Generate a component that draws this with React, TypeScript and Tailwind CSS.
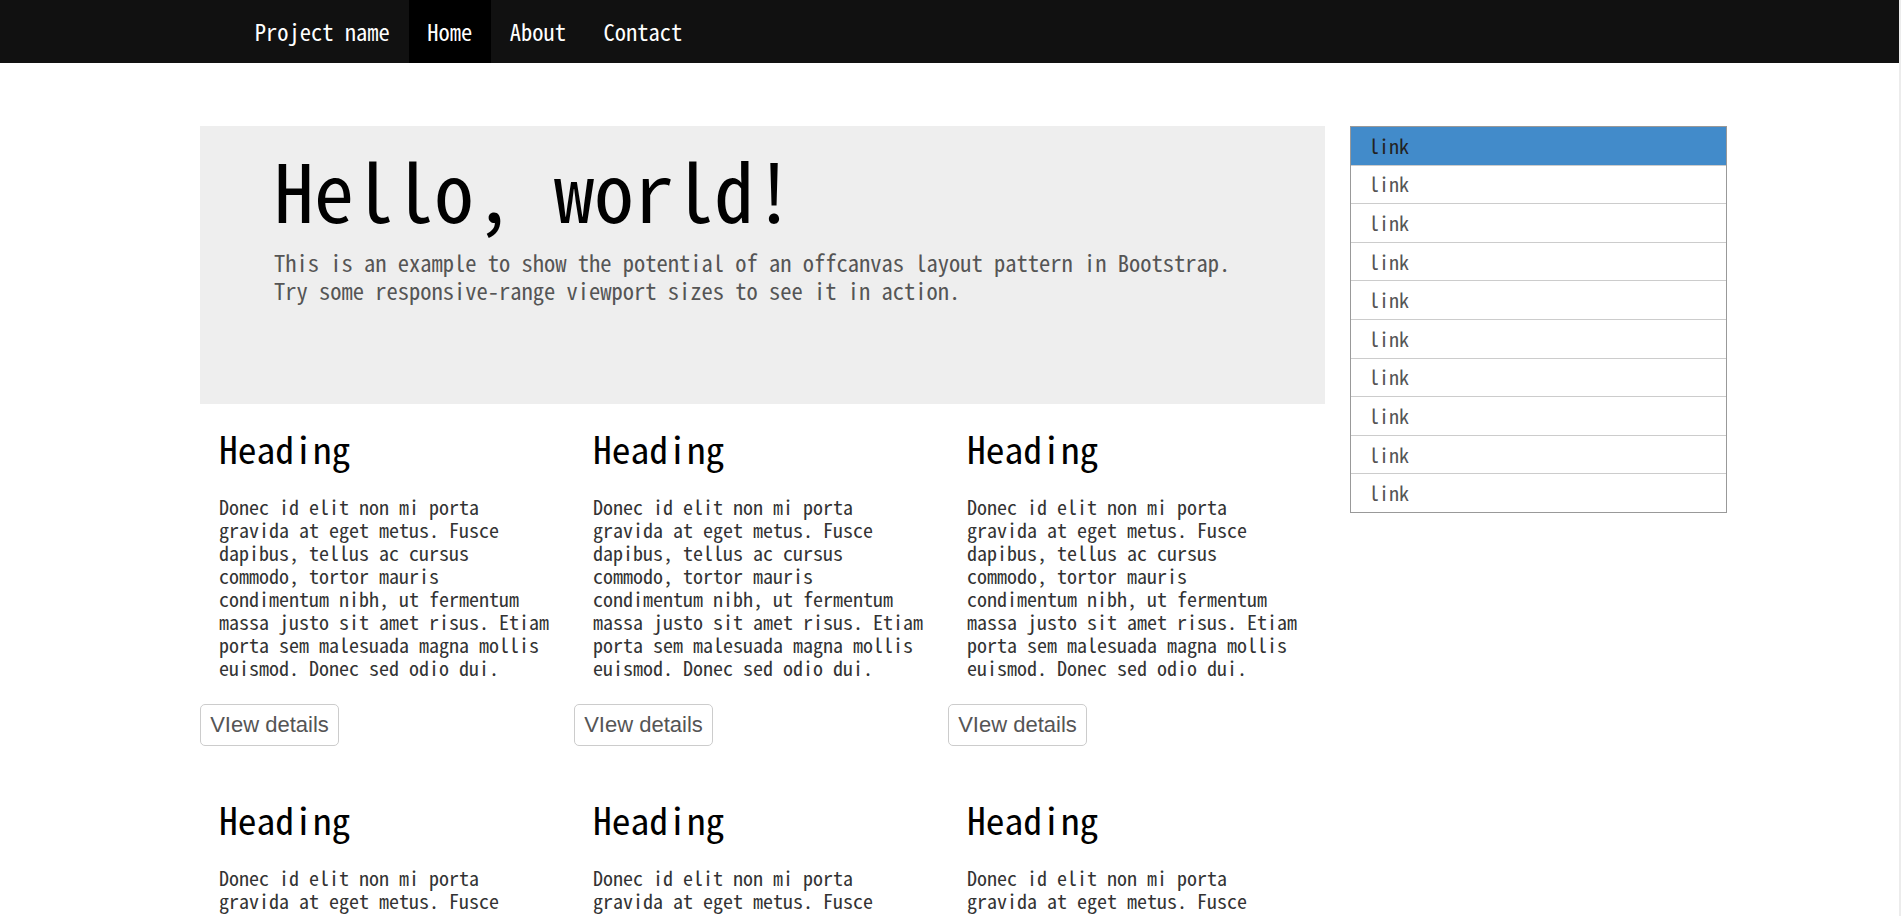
const mono = "font-['Noto_Sans_Mono_CJK_SC','Liberation_Mono',monospace]";

const blurb =
  'Donec id elit non mi porta gravida at eget metus. Fusce dapibus, tellus ac cursus commodo, tortor mauris condimentum nibh, ut fermentum massa justo sit amet risus. Etiam porta sem malesuada magna mollis euismod. Donec sed odio dui.';

function NavBar() {
  return (
    <nav className={`h-[63px] bg-[#111] flex items-stretch pl-[236px] text-white text-[22.5px] ${mono}`}>
      <a className="flex items-center px-[18.75px]">Project name</a>
      <a className="flex items-center px-[18.75px] bg-black">Home</a>
      <a className="flex items-center px-[18.75px]">About</a>
      <a className="flex items-center px-[18.75px]">Contact</a>
    </nav>
  );
}

function Teaser() {
  return (
    <div className="pb-[29px]">
      <h2 className={`mt-[23px] px-[19px] text-[37.5px] leading-[1.1] text-black ${mono}`}>Heading</h2>
      <p className={`mt-[27px] px-[19px] text-[20px] leading-[23px] text-[#333] ${mono}`}>{blurb}</p>
      <button className="mt-[24.5px] h-[42px] w-[139px] rounded-[5px] border border-[#ccc] bg-white font-['Liberation_Sans',Arial,sans-serif] text-[22px] text-[#555]">
        VIew details
      </button>
    </div>
  );
}

export default function App() {
  const links = Array.from({ length: 10 }, (_, i) => i);
  return (
    <div className="min-h-screen bg-white border-r-2 border-[#ececec]">
      <NavBar />
      <div className="flex items-start gap-[25px] pl-[200px] pt-[63px]">
        <div className="w-[1125px]">
          <div className="h-[278px] bg-[#eee] pl-[74px] pt-[18px]">
            <h1 className={`text-[80px] leading-[1.1] text-black ${mono}`}>Hello, world!</h1>
            <p className={`mt-[16px] text-[22.5px] leading-[28px] text-[#555] ${mono}`}>
              This is an example to show the potential of an offcanvas layout pattern in Bootstrap.
              <br />
              Try some responsive-range viewport sizes to see it in action.
            </p>
          </div>
          <div className="grid grid-cols-3 w-[1122px]">
            {[0, 1, 2, 3, 4, 5].map((i) => (
              <Teaser key={i} />
            ))}
          </div>
        </div>
        <div className={`w-[377px] border border-[#999] ${mono} text-[20px]`}>
          {links.map((i) => (
            <div
              key={i}
              className={
                i === 0
                  ? 'h-[37.6px] flex items-center pl-[18px] bg-[#428bca] text-[#222]'
                  : 'h-[38.6px] flex items-center pl-[18px] border-t border-[#ccc] text-[#555]'
              }
            >
              link
            </div>
          ))}
        </div>
      </div>
    </div>
  );
}
